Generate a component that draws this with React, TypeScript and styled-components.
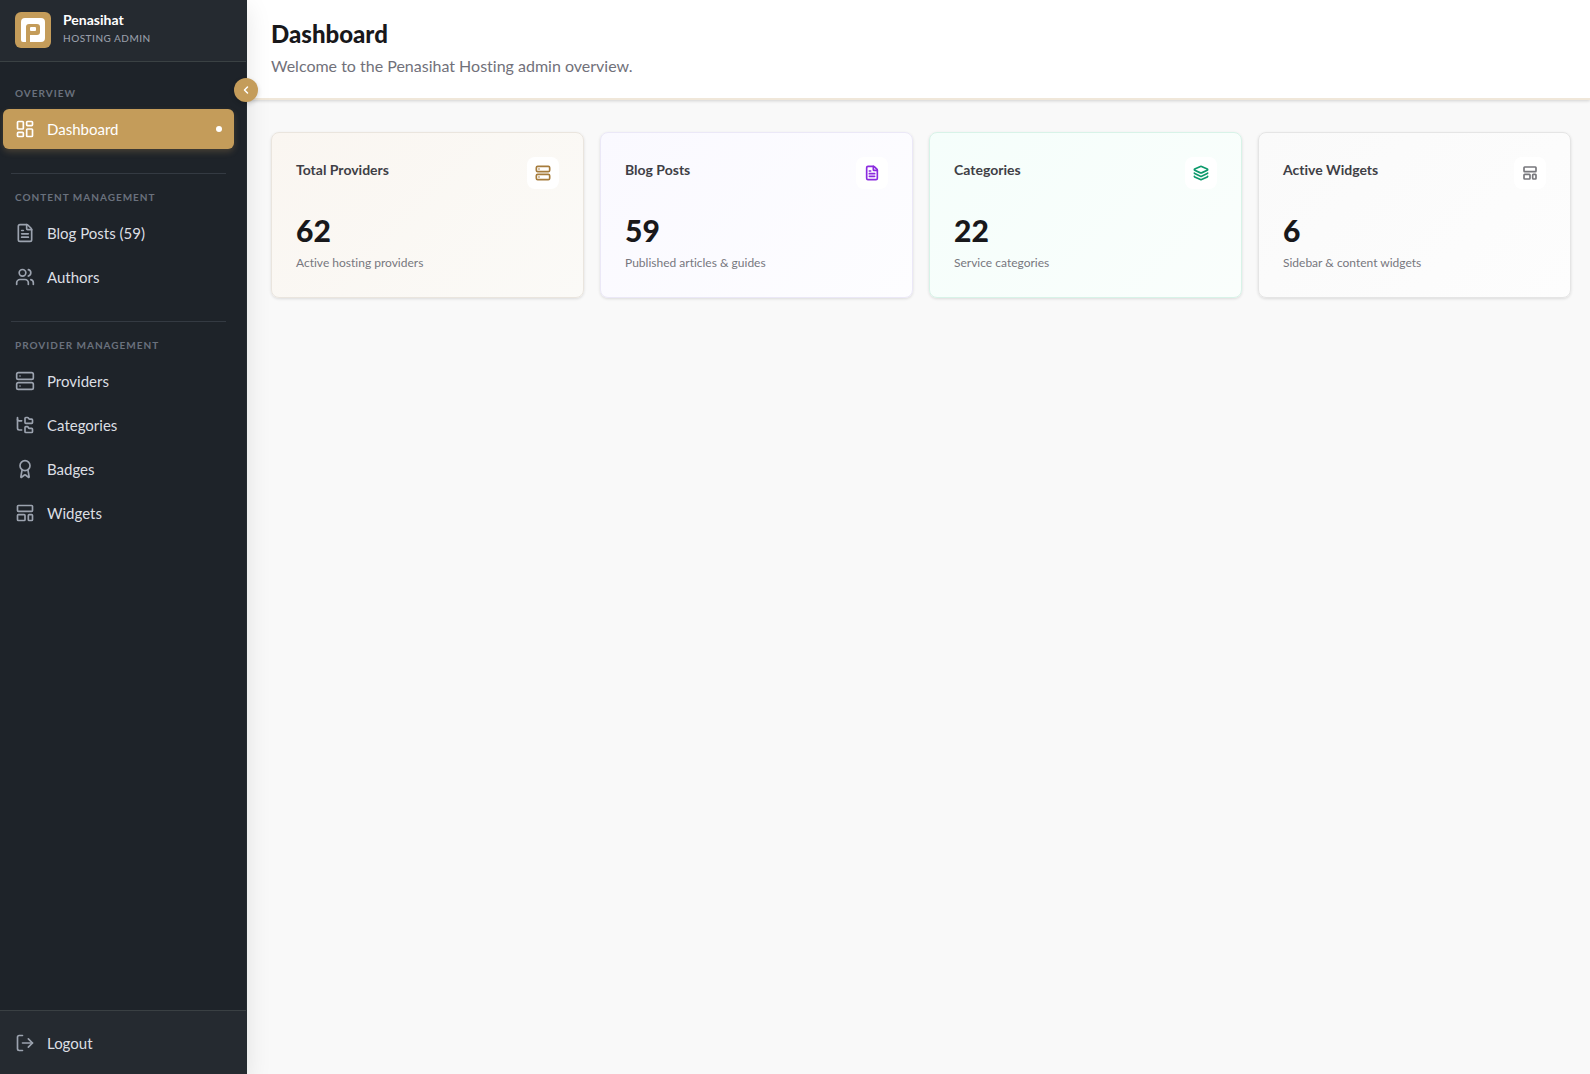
import React from 'react';
import styled, { createGlobalStyle } from 'styled-components';
import {
  Award,
  ChevronLeft,
  FileText,
  FolderTree,
  Layers,
  LayoutDashboard,
  LayoutTemplate,
  LogOut,
  Server,
  Users,
  type LucideIcon,
} from 'lucide-react';

const GlobalStyle = createGlobalStyle`
  *, *::before, *::after { box-sizing: border-box; }
  body {
    margin: 0;
    background: #f9f9f9;
    color: #18181b;
    font-family: Lato, "Open Sans", sans-serif;
    font-size: 14px;
    font-variant-ligatures: none;
  }
`;

const Shell = styled.div`
  display: flex;
  min-height: 100vh;
`;

const Sidebar = styled.aside`
  position: sticky;
  top: 0;
  z-index: 2;
  display: flex;
  flex-direction: column;
  flex: none;
  width: 247px;
  height: 100vh;
  background: #1e2329;
  border-right: 1px solid #242b30;
  box-shadow: 0 8px 24px rgba(0, 0, 0, 0.1);
`;

const Brand = styled.div`
  display: flex;
  align-items: center;
  gap: 12px;
  height: 62px;
  padding: 0 15px 2px;
  background: #252a30;
  border-bottom: 1px solid #3a4143;
`;

const LogoTile = styled.svg`
  display: block;
  width: 36px;
  height: 36px;
`;

const BrandText = styled.div`
  padding-bottom: 3px;
`;

const BrandName = styled.div`
  color: #ffffff;
  font-size: 14px;
  font-weight: 700;
  line-height: 20px;
`;

const BrandCaption = styled.div`
  color: #989ea9;
  font-size: 10px;
  font-weight: 500;
  letter-spacing: 0.05em;
  line-height: 16px;
  text-transform: uppercase;
`;

const CollapseButton = styled.button`
  position: absolute;
  top: 78px;
  right: -12px;
  display: flex;
  align-items: center;
  justify-content: center;
  width: 24px;
  height: 24px;
  padding: 0;
  border: 0;
  border-radius: 50%;
  background: #c49c5a;
  color: #ffffff;
  box-shadow: 0 2px 5px rgba(0, 0, 0, 0.16);
  cursor: pointer;
`;

const Nav = styled.nav`
  flex: 1;
  padding: 24px 12px 24px 3px;
`;

const NavGroup = styled.section`
  & + & {
    margin-top: 24px;
  }
`;

const Divider = styled.hr`
  height: 1px;
  margin: 0 8px 16px;
  border: 0;
  background: #343a42;
`;

const GroupTitle = styled.h2`
  margin: 0 0 8px;
  padding: 0 12px;
  color: #6a717d;
  font-size: 10px;
  font-weight: 700;
  letter-spacing: 0.1em;
  line-height: 15px;
  text-transform: uppercase;
`;

const NavList = styled.ul`
  display: flex;
  flex-direction: column;
  gap: 4px;
  margin: 0;
  padding: 0;
  list-style: none;
`;

const NavLink = styled.a<{ $active?: boolean }>`
  display: flex;
  align-items: center;
  gap: 12px;
  height: 40px;
  padding: 0 12px;
  border-radius: 6px;
  background: ${({ $active }) => ($active ? '#c49c5a' : 'transparent')};
  box-shadow: ${({ $active }) => ($active ? '0 3px 6px rgba(196, 156, 90, 0.24)' : 'none')};
  color: ${({ $active }) => ($active ? '#ffffff' : '#dcdfe3')};
  font-size: 15px;
  line-height: 20px;
  text-decoration: none;

  svg {
    flex: none;
    color: ${({ $active }) => ($active ? '#ffffff' : '#9ca3af')};
  }
`;

const ActiveDot = styled.span`
  width: 6px;
  height: 6px;
  margin-left: auto;
  border-radius: 50%;
  background: #ffffff;
`;

const SidebarFooter = styled.div`
  padding: 12px 12px 11px 3px;
  background: #252a30;
  border-top: 1px solid #3a4043;
`;

const LogoutButton = styled(NavLink).attrs({ as: 'button', type: 'button' })`
  width: 100%;
  border: 0;
  font-family: inherit;
  cursor: pointer;
`;

const Content = styled.div`
  flex: 1;
  min-width: 0;
`;

const PageHeader = styled.header`
  padding: 18px 24px 20px;
  background: #ffffff;
  border-bottom: 2px solid #f0e7d9;
  box-shadow: 0 1px 3px rgba(0, 0, 0, 0.16);
`;

const PageTitle = styled.h1`
  margin: 0;
  font-size: 24px;
  font-weight: 900;
  line-height: 32px;
`;

const PageIntro = styled.p`
  margin: 4px 0 0;
  color: #71717a;
  font-size: 16px;
  line-height: 24px;
`;

const CardGrid = styled.main`
  display: grid;
  grid-template-columns: repeat(4, minmax(0, 1fr));
  gap: 16px;
  padding: 32px 19px 32px 24px;
`;

type Tone = 'gold' | 'violet' | 'green' | 'gray';

const tones: Record<Tone, { from: string; to: string; border: string; icon: string }> = {
  gold: { from: '#faf6f1', to: '#fbfaf7', border: '#eae5de', icon: '#a67c3d' },
  violet: { from: '#faf9ff', to: '#fdfdff', border: '#ebe8f7', icon: '#8b2bdf' },
  green: { from: '#f5fefb', to: '#fafefc', border: '#d8f3e8', icon: '#0d9a6c' },
  gray: { from: '#fafafa', to: '#fdfdfd', border: '#e5e5e5', icon: '#77777c' },
};

const Card = styled.article<{ $tone: Tone }>`
  padding: 24px;
  border: 1px solid ${({ $tone }) => tones[$tone].border};
  border-radius: 8px;
  background: linear-gradient(
    135deg,
    ${({ $tone }) => tones[$tone].from},
    ${({ $tone }) => tones[$tone].to}
  );
  box-shadow: 0 1px 3px rgba(0, 0, 0, 0.12);
`;

const CardTop = styled.div`
  display: flex;
  align-items: flex-start;
  justify-content: space-between;
  margin-bottom: 20px;
`;

const CardTitle = styled.h2`
  margin: 3px 0 0;
  color: #3f3f46;
  font-size: 14px;
  font-weight: 700;
  line-height: 20px;
`;

const IconTile = styled.span<{ $tone: Tone }>`
  display: flex;
  align-items: center;
  justify-content: center;
  width: 32px;
  height: 32px;
  border-radius: 8px;
  background: #ffffff;
  color: ${({ $tone }) => tones[$tone].icon};
`;

const CardValue = styled.div`
  margin-bottom: 2px;
  font-size: 30px;
  font-weight: 900;
  line-height: 42px;
`;

const CardNote = styled.p`
  margin: 0;
  color: #77777e;
  font-size: 12px;
  line-height: 20px;
`;

interface NavEntry {
  label: string;
  icon: LucideIcon;
  active?: boolean;
}

const groups: { title: string; entries: NavEntry[] }[] = [
  { title: 'Overview', entries: [{ label: 'Dashboard', icon: LayoutDashboard, active: true }] },
  {
    title: 'Content Management',
    entries: [
      { label: 'Blog Posts (59)', icon: FileText },
      { label: 'Authors', icon: Users },
    ],
  },
  {
    title: 'Provider Management',
    entries: [
      { label: 'Providers', icon: Server },
      { label: 'Categories', icon: FolderTree },
      { label: 'Badges', icon: Award },
      { label: 'Widgets', icon: LayoutTemplate },
    ],
  },
];

const stats: { title: string; value: number; note: string; icon: LucideIcon; tone: Tone }[] = [
  { title: 'Total Providers', value: 62, note: 'Active hosting providers', icon: Server, tone: 'gold' },
  { title: 'Blog Posts', value: 59, note: 'Published articles & guides', icon: FileText, tone: 'violet' },
  { title: 'Categories', value: 22, note: 'Service categories', icon: Layers, tone: 'green' },
  { title: 'Active Widgets', value: 6, note: 'Sidebar & content widgets', icon: LayoutTemplate, tone: 'gray' },
];

function Logo() {
  return (
    <LogoTile viewBox="0 0 36 36" aria-hidden="true">
      <rect width="36" height="36" rx="6" fill="#c49c5a" />
      <path
        d="M10 6h16a4 4 0 0 1 4 4v16a4 4 0 0 1-4 4H15v-7h7a3 3 0 0 0 3-3v-5a3 3 0 0 0-3-3H14a3 3 0 0 0-3 3v15H8a2 2 0 0 1-2-2V10a4 4 0 0 1 4-4Z"
        fill="#fff"
      />
      <rect x="15" y="15" width="6" height="4" rx="1" fill="#fff" />
    </LogoTile>
  );
}

export default function App() {
  return (
    <>
      <GlobalStyle />
      <Shell>
        <Sidebar>
          <Brand>
            <Logo />
            <BrandText>
              <BrandName>Penasihat</BrandName>
              <BrandCaption>Hosting Admin</BrandCaption>
            </BrandText>
          </Brand>
          <CollapseButton type="button" aria-label="Collapse sidebar">
            <ChevronLeft size={12} strokeWidth={3} />
          </CollapseButton>
          <Nav aria-label="Main">
            {groups.map(({ title, entries }, index) => (
              <NavGroup key={title}>
                {index > 0 && <Divider />}
                <GroupTitle>{title}</GroupTitle>
                <NavList>
                  {entries.map(({ label, icon: Icon, active }) => (
                    <li key={label}>
                      <NavLink href="#" $active={active} aria-current={active ? 'page' : undefined}>
                        <Icon size={20} strokeWidth={2} />
                        {label}
                        {active && <ActiveDot />}
                      </NavLink>
                    </li>
                  ))}
                </NavList>
              </NavGroup>
            ))}
          </Nav>
          <SidebarFooter>
            <LogoutButton>
              <LogOut size={20} strokeWidth={2} />
              Logout
            </LogoutButton>
          </SidebarFooter>
        </Sidebar>
        <Content>
          <PageHeader>
            <PageTitle>Dashboard</PageTitle>
            <PageIntro>Welcome to the Penasihat Hosting admin overview.</PageIntro>
          </PageHeader>
          <CardGrid>
            {stats.map(({ title, value, note, icon: Icon, tone }) => (
              <Card key={title} $tone={tone}>
                <CardTop>
                  <CardTitle>{title}</CardTitle>
                  <IconTile $tone={tone}>
                    <Icon size={16} strokeWidth={2.5} />
                  </IconTile>
                </CardTop>
                <CardValue>{value}</CardValue>
                <CardNote>{note}</CardNote>
              </Card>
            ))}
          </CardGrid>
        </Content>
      </Shell>
    </>
  );
}
